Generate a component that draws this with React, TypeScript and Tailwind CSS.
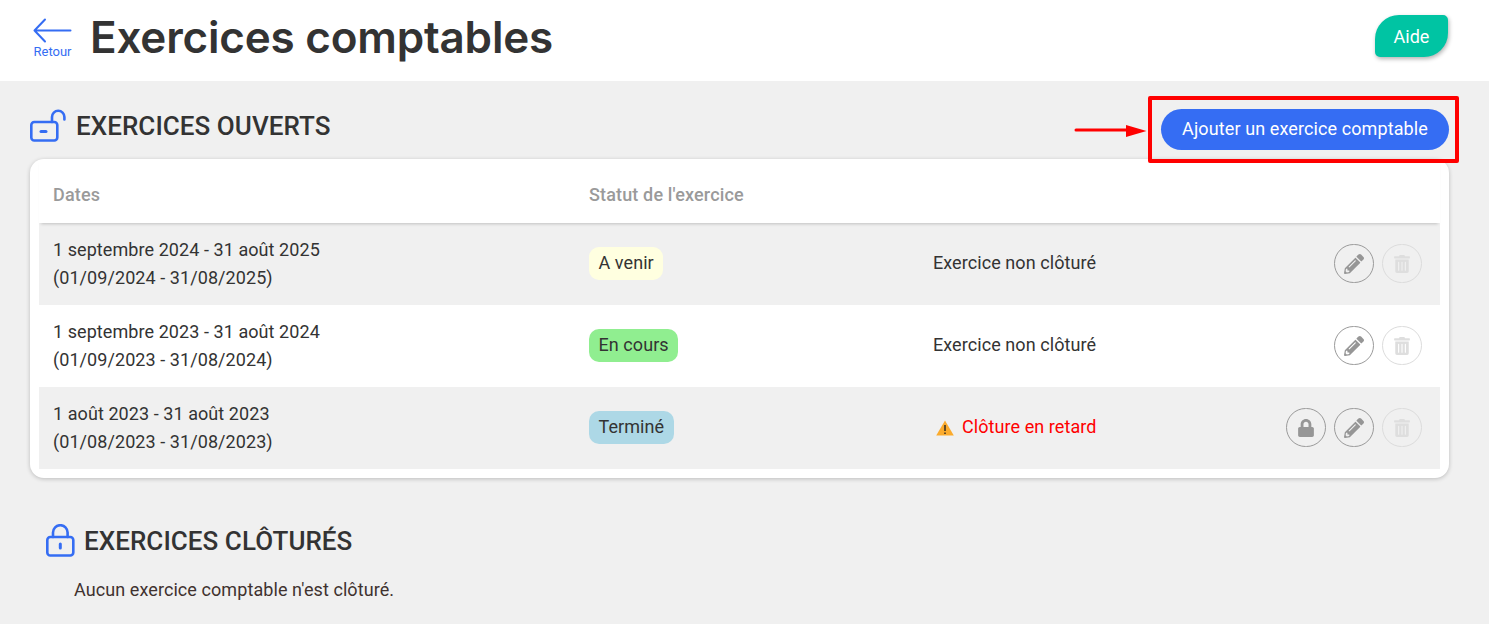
import { FaPencilAlt, FaTrashAlt, FaLock } from "react-icons/fa";

const rows = [
  { a: "1 septembre 2024 - 31 août 2025", b: "(01/09/2024 - 31/08/2025)", s: "A venir", c: "bg-[#ffffe0]", shaded: true, late: false },
  { a: "1 septembre 2023 - 31 août 2024", b: "(01/09/2023 - 31/08/2024)", s: "En cours", c: "bg-[#90ee90]", shaded: false, late: false },
  { a: "1 août 2023 - 31 août 2023", b: "(01/08/2023 - 31/08/2023)", s: "Terminé", c: "bg-[#add8e6]", shaded: true, late: true },
];

function RoundBtn({ children, disabled }: { children: React.ReactNode; disabled?: boolean }) {
  return (
    <span className={"flex h-[39px] w-[40px] items-center justify-center rounded-full border " + (disabled ? "border-[#dcdcdc] text-[#dedede]" : "border-[#9a9a9a] text-[#969696]")}>
      {children}
    </span>
  );
}

export default function App() {
  return (
    <div className="relative min-h-[624px] overflow-hidden bg-[#f0f0f0] font-['Roboto',sans-serif] text-[#333333]">
      <header className="flex h-[81px] items-start justify-between bg-white pl-[33px] pr-[41px] pt-[15px]">
        <div className="flex items-start gap-[18px]">
          <div className="flex w-[39px] flex-col items-center pt-[3px] text-[#356df3]">
            <svg width="39" height="26" viewBox="0 0 39 26" fill="none" stroke="currentColor" strokeWidth="2" strokeLinecap="round" strokeLinejoin="round">
              <path d="M12 1.5 1.5 12.5 12 23.5M1.5 12.5H37.5" />
            </svg>
            <span className="whitespace-nowrap text-[13px] leading-[16px]">Retour</span>
          </div>
          <h1 className="mt-[-1px] font-['Inter',sans-serif] text-[44px] font-semibold leading-[46px] tracking-[-0.2px] text-[#333333]">Exercices comptables</h1>
        </div>
        <button className="flex h-[42px] w-[73px] items-center justify-center rounded-tl-[24px] rounded-tr-[5px] rounded-br-[24px] rounded-bl-[5px] bg-[#00c4a3] text-[18px] text-white shadow-[1px_2px_4px_rgba(0,0,0,0.3)]">
          Aide
        </button>
      </header>

      <main className="px-[30px] pr-[40px]">
        <div className="flex h-[78px] items-start justify-between">
          <div className="flex items-center gap-[10px] pt-[26px]">
            <svg width="36" height="33" viewBox="0 0 36 33" fill="none" stroke="#356df3" strokeWidth="2.6" strokeLinecap="round" strokeLinejoin="round">
              <rect x="1.3" y="13" width="26" height="18.5" rx="3" />
              <path d="M11 22.5h5" strokeWidth="3" />
              <path d="M22 13V8a6.2 6.2 0 0 1 12.4 0v2.5" />
            </svg>
            <h2 className="mt-[2px] text-[26px] font-medium leading-[34px] tracking-[0.05px]">EXERCICES OUVERTS</h2>
          </div>
          <button className="mt-[28px] h-[41px] w-[288px] rounded-full bg-[#356df3] pb-[2px] text-[18px] tracking-[0.1px] text-white">
            Ajouter un exercice comptable
          </button>
        </div>

        <section className="rounded-[14px] bg-white px-[9px] pb-[9px] shadow-[0_1px_4px_rgba(0,0,0,0.22)]">
          <div className="relative flex h-[64px] items-center pt-[6px] text-[18px] font-medium tracking-[0.15px] text-[#9a9a9a] shadow-[0_3px_3px_-2px_rgba(0,0,0,0.2)]">
            <span className="w-[550px] pl-[14px]">Dates</span>
            <span>Statut de l'exercice</span>
          </div>
          {rows.map((r) => (
            <div key={r.a} className={"flex h-[82px] items-center pb-[1px] text-[18px] tracking-[0.07px] " + (r.shaded ? "bg-[#f0f0f0]" : "bg-white")}>
              <div className="w-[550px] pl-[14px] leading-[27.5px]">
                <div>{r.a}</div>
                <div>{r.b}</div>
              </div>
              <div className="w-[344px]">
                <span className={"inline-block h-[33px] rounded-[10px] px-[9.5px] leading-[32px] " + r.c}>{r.s}</span>
              </div>
              <div className={"mb-[2px] flex items-center gap-[8px] " + (r.late ? "pl-[3px] text-[#ff0000]" : "")}>
                {r.late && (
                  <svg className="mt-[2px]" width="18" height="16" viewBox="0 0 18 16">
                    <path d="M9 .5 17.8 15.5H.2Z" fill="#fbab2d" />
                    <path d="M9 5v6M9 12.4v1.6" stroke="#222" strokeWidth="1.4" />
                  </svg>
                )}
                {r.late ? "Clôture en retard" : "Exercice non clôturé"}
              </div>
              <div className="ml-auto flex items-center gap-[8px] pr-[18px]">
                {r.late && <RoundBtn><FaLock size={18} /></RoundBtn>}
                <RoundBtn><FaPencilAlt size={20} /></RoundBtn>
                <RoundBtn disabled><FaTrashAlt size={18} /></RoundBtn>
              </div>
            </div>
          ))}
        </section>

        <div className="ml-[16px] mt-[45px] flex items-center gap-[9px]">
          <svg width="29" height="33" viewBox="0 0 29 33" fill="none" stroke="#356df3" strokeWidth="2.6" strokeLinecap="round" strokeLinejoin="round">
            <rect x="1.3" y="13" width="26" height="18.5" rx="3" />
            <path d="M14.3 20v4" strokeWidth="3" />
            <path d="M7 13V8.5a7.3 7.3 0 0 1 14.6 0V13" />
          </svg>
          <h2 className="mt-[1px] text-[26px] font-medium leading-[34px] tracking-[0.05px]">EXERCICES CLÔTURÉS</h2>
        </div>
        <p className="ml-[44px] mt-[20px] text-[18px] leading-[24px] tracking-[0.08px] text-[#40322f]">Aucun exercice comptable n'est clôturé.</p>
      </main>

      <div className="absolute left-[1148px] top-[96px] h-[67px] w-[311px] rounded-[2px] border-[4px] border-[#ff0000]" />
      <svg className="absolute left-[1074px] top-[123px]" width="74" height="16" viewBox="0 0 74 16">
        <path d="M2 7h50" stroke="#ff0000" strokeWidth="3" strokeLinecap="round" />
        <path d="M52 2 72.5 8 52 14Z" fill="#ff0000" />
      </svg>
    </div>
  );
}
